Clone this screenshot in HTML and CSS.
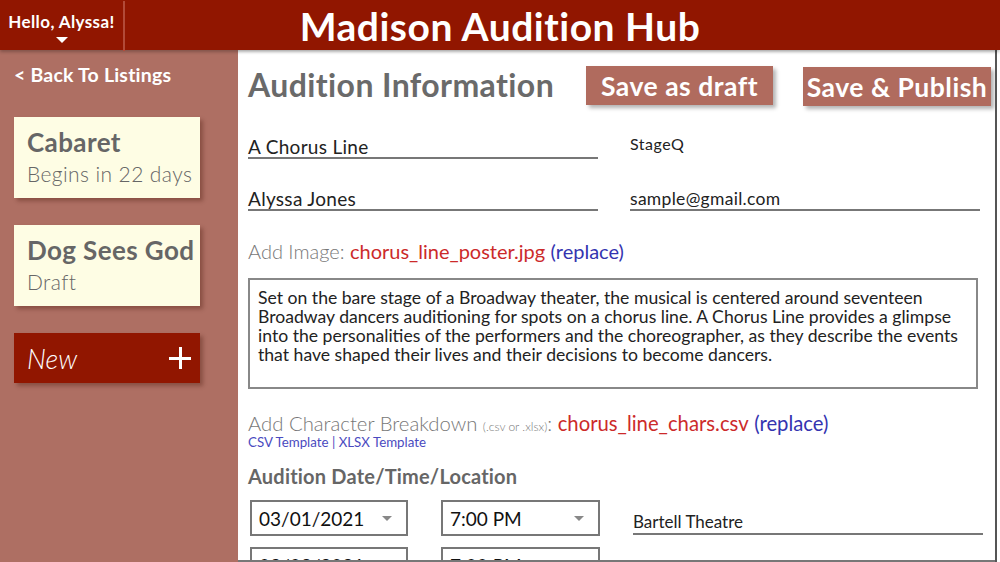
FILE: index.html
```html
<!DOCTYPE html>
<html>
<head>
<meta charset="utf-8">
<link rel="stylesheet" href="styles.css">
</head>
<body>
<div class="app">
  <header class="topbar">
    <div class="greeting">
      <span class="hello">Hello, Alyssa!</span>
      <span class="caret"></span>
    </div>
    <h1 class="title">Madison Audition Hub</h1>
    <div class="spacer"></div>
  </header>
  <div class="content">
    <aside class="sidebar">
      <a class="back">&lt; Back To Listings</a>
      <div class="card">
        <div class="card-title">Cabaret</div>
        <div class="card-sub">Begins in 22 days</div>
      </div>
      <div class="card">
        <div class="card-title">Dog Sees God</div>
        <div class="card-sub">Draft</div>
      </div>
      <div class="new-btn"><span>New</span><span class="plus"></span></div>
    </aside>
    <main class="main">
      <div class="main-head">
        <h2 class="section-title">Audition Information</h2>
        <div class="actions">
          <button class="btn btn-draft">Save as draft</button>
          <button class="btn btn-publish">Save &amp; Publish</button>
        </div>
      </div>
      <div class="row">
        <div class="field underline">A Chorus Line</div>
        <div class="field small plain">StageQ</div>
      </div>
      <div class="row">
        <div class="field underline">Alyssa Jones</div>
        <div class="field underline small-mail">sample@gmail.com</div>
      </div>
      <div class="upload">Add Image: <span class="file">chorus_line_poster.jpg</span> <span class="link">(replace)</span></div>
      <div class="textarea">Set on the bare stage of a Broadway theater, the musical is centered around seventeen<br>Broadway dancers auditioning for spots on a chorus line. A Chorus Line provides a glimpse<br>into the personalities of the performers and the choreographer, as they describe the events<br>that have shaped their lives and their decisions to become dancers.</div>
      <div class="upload upload-chars">Add Character Breakdown <span class="hint">(.csv or .xlsx)</span>: <span class="file">chorus_line_chars.csv</span> <span class="link">(replace)</span></div>
      <div class="templates">CSV Template | XLSX Template</div>
      <h3 class="sub-title">Audition Date/Time/Location</h3>
      <div class="slot">
        <div class="select"><span>03/01/2021</span><span class="arrow"></span></div>
        <div class="select"><span>7:00 PM</span><span class="arrow"></span></div>
        <div class="location">Bartell Theatre</div>
      </div>
      <div class="slot">
        <div class="select"><span>03/02/2021</span><span class="arrow"></span></div>
        <div class="select"><span>7:00 PM</span><span class="arrow"></span></div>
      </div>
    </main>
    <div class="edge"></div>
  </div>
</div>
</body>
</html>
```
FILE: styles.css
```css
* { box-sizing: border-box; }
html, body { margin: 0; padding: 0; }
body {
  width: 1000px;
  height: 562px;
  overflow: hidden;
  background: #ffffff;
  font-family: "Lato", "Open Sans", sans-serif;
}
.app { display: flex; flex-direction: column; height: 562px; }
.topbar {
  height: 50px;
  background: #911600;
  display: grid;
  grid-template-columns: 125px 1fr 125px;
  align-items: center;
  position: relative;
  z-index: 2;
  box-shadow: 0 2px 3px rgba(0,0,0,0.25);
}
.greeting {
  height: 50px;
  border-right: 2px solid #b24a38;
  display: flex;
  flex-direction: column;
  align-items: center;
  padding-top: 11px;
  color: #fff;
}
.hello { font-weight: 700; font-size: 17px; letter-spacing: 0.4px; line-height: 19px; }
.caret {
  width: 0; height: 0;
  margin-top: 6px;
  border-left: 6px solid transparent;
  border-right: 6px solid transparent;
  border-top: 6px solid #fff;
}
.title {
  margin: 0;
  text-align: center;
  color: #fff;
  font-weight: 700;
  font-size: 39px;
  letter-spacing: 0.5px;
  line-height: 52px;
}
.content { display: flex; flex: 1; min-height: 0; }
.sidebar {
  width: 238px;
  background: #ae6f63;
  padding: 14px 38px 0 14px;
  display: flex;
  flex-direction: column;
}
.back {
  color: #fff;
  font-weight: 700;
  font-size: 19.5px;
  letter-spacing: 0.2px;
  line-height: 22px;
  margin-bottom: 31px;
}
.card {
  background: #fefde4;
  height: 81px;
  padding: 10px 4px 10px 13px;
  margin-bottom: 27px;
  box-shadow: 3px 3px 4px rgba(70,20,10,0.35);
  color: #666;
  white-space: nowrap;
}
.card-title { font-weight: 700; font-size: 26px; letter-spacing: 0.4px; line-height: 30px; }
.card-sub { font-size: 21px; line-height: 33px; font-weight: 300; letter-spacing: 0.4px; }
.new-btn {
  background: #911600;
  height: 50px;
  display: flex;
  align-items: center;
  justify-content: space-between;
  padding: 0 9px 0 13px;
  color: #fff;
  font-style: italic;
  font-size: 27px;
  font-weight: 300;
  box-shadow: 3px 3px 4px rgba(70,20,10,0.35);
}
.plus {
  width: 22px; height: 22px;
  position: relative;
}
.plus::before, .plus::after {
  content: "";
  position: absolute;
  background: #fff;
}
.plus::before { left: 10px; top: 0; width: 3px; height: 22px; }
.plus::after { top: 10px; left: 0; width: 22px; height: 3px; }
.main {
  flex: 1;
  padding: 15px 0 0 10px;
  color: #444;
  box-shadow: inset 0 3px 3px -2px rgba(0,0,0,0.15);
  border-bottom: 2px solid #777;
  overflow: hidden;
}
.edge { width: 5px; border-left: 2px solid #555; background: #fff; }
.main-head { display: flex; align-items: flex-start; height: 52px; }
.section-title {
  margin: 0;
  font-size: 32px;
  font-weight: 700;
  letter-spacing: 0.4px;
  color: #6a6a6a;
  line-height: 40px;
  width: 338px;
  white-space: nowrap;
}
.actions { display: flex; gap: 30px; }
.btn {
  border: none;
  background: #b06b5e;
  color: #fff;
  font-family: inherit;
  font-weight: 700;
  font-size: 26.5px;
  letter-spacing: 0.5px;
  height: 39px;
  padding: 0;
  width: 187px;
  box-shadow: 3px 3px 4px rgba(0,0,0,0.3);
  margin-top: 1px;
  white-space: nowrap;
}
.btn-publish { width: 188px; margin-top: 2px; }
.row { display: flex; gap: 32px; height: 52px; }
.row + .row { height: 53px; }
.field {
  width: 350px;
  height: 42px;
  font-size: 19px;
  letter-spacing: 0.3px;
  color: #222;
  font-weight: 400;
  padding-top: 20px;
  line-height: 20px;
}
.underline { border-bottom: 2px solid #777; }
.small { font-size: 16px; letter-spacing: 0.5px; padding-top: 17px; }
.plain { height: auto; }
.small-mail { font-size: 17.5px; letter-spacing: 0.3px; }
.upload {
  font-size: 20px;
  color: #777;
  font-weight: 300;
  line-height: 22px;
  margin-top: 18px;
}
.file { color: #cc2a2a; font-weight: 400; }
.link { color: #3434b0; font-weight: 400; }
.hint { font-size: 12px; }
.textarea {
  width: 730px;
  height: 111px;
  border: 2px solid #888;
  margin-top: 16px;
  padding: 8px 8px;
  font-size: 17.6px;
  line-height: 19px;
  color: #222;
  white-space: nowrap;
  overflow: hidden;
}
.upload-chars { margin-top: 23px; font-size: 20.3px; }
.templates { font-size: 13.3px; color: #4a4ac0; line-height: 15px; margin-top: -3px; }
.sub-title {
  margin: 15px 0 0 0;
  font-size: 20px;
  font-weight: 700;
  letter-spacing: 0.2px;
  color: #666;
  line-height: 22px;
}
.slot { display: flex; gap: 33px; margin-top: 13px; align-items: flex-end; }
.slot + .slot { margin-top: 11px; }
.select {
  width: 159px;
  height: 36px;
  border: 2px solid #777;
  display: flex;
  align-items: center;
  justify-content: space-between;
  padding: 0 14px 0 7px;
  font-size: 19px;
  color: #111;
}
.select:first-child { margin-left: 2px; width: 158px; }
.arrow {
  width: 0; height: 0;
  border-left: 5px solid transparent;
  border-right: 5px solid transparent;
  border-top: 5px solid #888;
}
.location {
  width: 350px;
  border-bottom: 2px solid #777;
  font-size: 17px;
  color: #222;
  padding-bottom: 1px;
  margin-bottom: 1px;
}
```
